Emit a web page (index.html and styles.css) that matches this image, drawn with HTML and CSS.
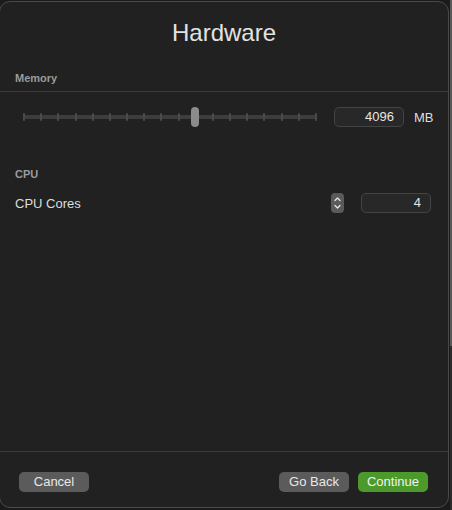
FILE: index.html
```html
<!DOCTYPE html>
<html>
<head>
<meta charset="utf-8">
<link rel="stylesheet" href="styles.css">
</head>
<body>
<div class="screen">
  <div class="window">
    <h1 class="title">Hardware</h1>
    <div class="section-label mem-label">Memory</div>
    <div class="row mem-row">
      <div class="slider">
        <div class="track"></div>
        <div class="ticks">
          <span></span><span></span><span></span><span></span><span></span><span></span>
          <span></span><span></span><span></span><span></span><span></span><span></span>
          <span></span><span></span><span></span><span></span><span></span><span></span>
        </div>
        <div class="thumb"></div>
      </div>
      <div class="field mem-field">4096</div>
      <span class="unit">MB</span>
    </div>
    <div class="section-label cpu-label">CPU</div>
    <div class="row cpu-row">
      <span class="row-label">CPU Cores</span>
      <div class="stepper">
        <svg width="13" height="20" viewBox="0 0 13 20">
          <path d="M4 7.5 L6.5 5 L9 7.5" fill="none" stroke="#e6e6e6" stroke-width="1.3" stroke-linecap="round" stroke-linejoin="round"/>
          <path d="M4 12.5 L6.5 15 L9 12.5" fill="none" stroke="#e6e6e6" stroke-width="1.3" stroke-linecap="round" stroke-linejoin="round"/>
        </svg>
      </div>
      <div class="field cpu-field">4</div>
    </div>
    <div class="spacer"></div>
    <div class="footer">
      <button class="btn">Cancel</button>
      <div class="right-btns">
        <button class="btn">Go Back</button>
        <button class="btn primary">Continue</button>
      </div>
    </div>
  </div>
  <div class="strip"></div>
</div>
</body>
</html>
```
FILE: styles.css
```css
* { box-sizing: border-box; }
html, body {
  margin: 0;
  padding: 0;
  background: #1b1b1b;
  width: 452px;
  height: 510px;
  overflow: hidden;
  font-family: "Liberation Sans", Arial, sans-serif;
}
.screen {
  display: flex;
  width: 452px;
  height: 510px;
}
.window {
  margin-top: 1px;
  margin-left: -1px;
  width: 450px;
  height: 507px;
  background: #212121;
  border: 1px solid #4a4a4a;
  border-radius: 11px;
  display: flex;
  flex-direction: column;
  flex-shrink: 0;
}
.strip {
  flex: 1;
  background: linear-gradient(#5a5a5a 0, #5a5a5a 346px, #2b2b2b 346px);
  margin-left: 1px;
}
.title {
  margin: 17px 0 0;
  font-size: 24px;
  line-height: 28px;
  font-weight: 400;
  color: #e2e2e2;
  text-align: center;
}
.section-label {
  font-size: 11px;
  line-height: 14px;
  font-weight: 700;
  color: #9b9b9b;
  padding-left: 15px;
}
.mem-label {
  margin-top: 24px;
  padding-bottom: 6px;
  border-bottom: 1px solid #3b3b3b;
}
.row {
  display: flex;
  align-items: center;
  height: 20px;
  padding-left: 15px;
  padding-right: 16px;
}
.mem-row { margin-top: 15px; }
.slider {
  position: relative;
  margin-left: 8px;
  width: 294px;
  height: 20px;
  flex-shrink: 0;
}
.track {
  position: absolute;
  left: 0;
  right: 0;
  top: 8px;
  height: 4px;
  background: #3d3d3d;
  border-radius: 2px;
}
.ticks {
  position: absolute;
  left: 0;
  right: 0;
  top: 6px;
  height: 8px;
  display: flex;
  justify-content: space-between;
}
.ticks span {
  width: 2px;
  height: 8px;
  background: #4a4a4a;
  border-radius: 1px;
}
.thumb {
  position: absolute;
  left: 168px;
  top: 0;
  width: 8px;
  height: 20px;
  border-radius: 4px;
  background: #8c8c8c;
}
.field {
  height: 20px;
  width: 70px;
  flex-shrink: 0;
  background: #282828;
  border: 1px solid #444;
  border-radius: 5px;
  color: #e6e6e6;
  font-size: 13px;
  line-height: 18px;
  text-align: right;
}
.mem-field {
  margin-left: 17px;
  padding-right: 9px;
}
.unit {
  margin-left: 10px;
  font-size: 13px;
  color: #dedede;
  white-space: nowrap;
}
.cpu-label { margin-top: 40px; }
.cpu-row {
  margin-top: 12px;
  padding-right: 17px;
}
.row-label {
  font-size: 13px;
  color: #dedede;
  flex: 1;
}
.stepper {
  width: 13px;
  height: 20px;
  background: #5a5a5a;
  border-radius: 4px;
  display: flex;
  flex-shrink: 0;
}
.cpu-field {
  margin-left: 17px;
  padding-right: 9px;
}
.spacer { flex: 1; }
.footer {
  border-top: 1px solid #3b3b3b;
  padding: 20px 20px 15px 19px;
  display: flex;
  justify-content: space-between;
}
.right-btns {
  display: flex;
  gap: 9px;
}
.btn {
  width: 70px;
  height: 20px;
  border: none;
  border-radius: 5px;
  background: #5b5b5b;
  color: #e8e8e8;
  font-family: "Liberation Sans", Arial, sans-serif;
  font-size: 13px;
  line-height: 20px;
  padding: 0;
  text-align: center;
}
.btn.primary {
  background: #4b9a2b;
  color: #f2f2f2;
}
```
